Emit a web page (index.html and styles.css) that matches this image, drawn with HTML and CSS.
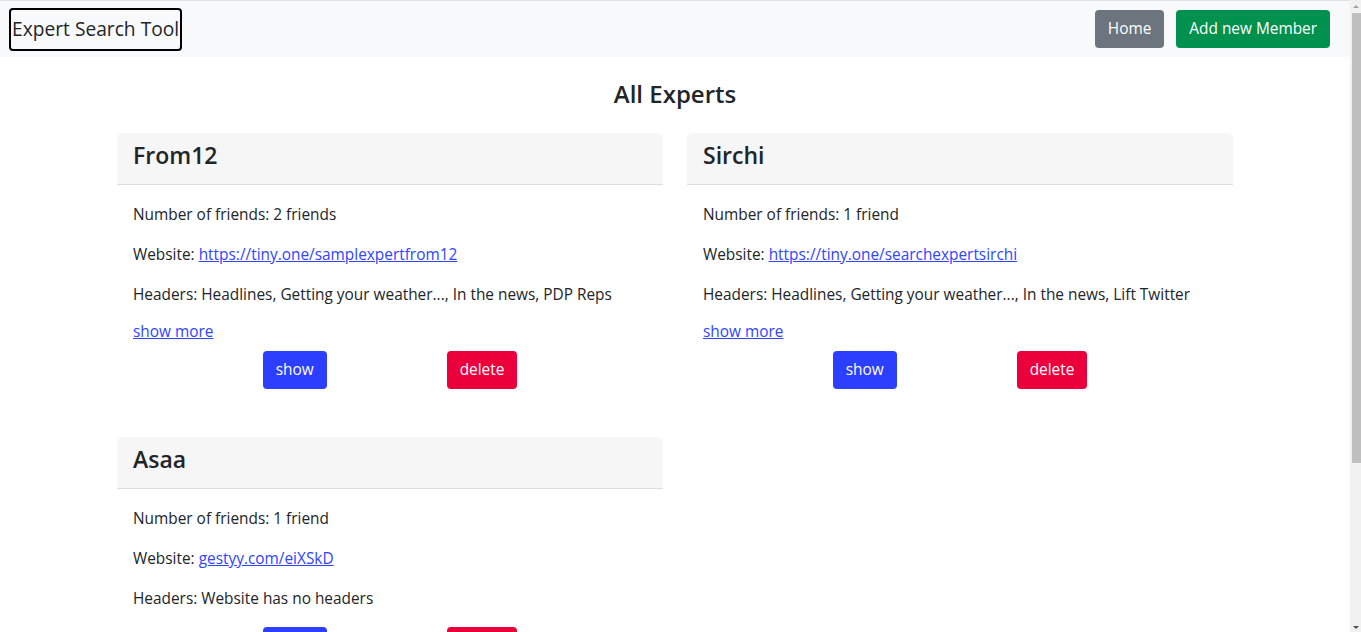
FILE: index.html
```html
<!DOCTYPE html>
<html lang="en">
<head>
<meta charset="utf-8">
<title>Expert Search Tool</title>
<link rel="stylesheet" href="styles.css">
</head>
<body>
<nav class="navbar">
  <div class="brand">Expert Search Tool</div>
  <div class="nav-actions">
    <a class="btn btn-gray" href="#">Home</a>
    <a class="btn btn-green" href="#">Add new Member</a>
  </div>
</nav>
<main class="container">
  <h2 class="title">All Experts</h2>
  <div class="grid">
    <div class="card">
      <div class="card-header"><h3>From12</h3></div>
      <div class="card-body">
        <p>Number of friends: 2 friends</p>
        <p>Website: <a class="link" href="#">https://tiny.one/samplexpertfrom12</a></p>
        <p>Headers: Headlines, Getting your weather..., In the news, PDP Reps</p>
        <a class="link more" href="#">show more</a>
        <div class="actions">
          <a class="btn btn-blue" href="#">show</a>
          <a class="btn btn-red" href="#">delete</a>
        </div>
      </div>
    </div>
    <div class="card">
      <div class="card-header"><h3>Sirchi</h3></div>
      <div class="card-body">
        <p>Number of friends: 1 friend</p>
        <p>Website: <a class="link" href="#">https://tiny.one/searchexpertsirchi</a></p>
        <p>Headers: Headlines, Getting your weather..., In the news, Lift Twitter</p>
        <a class="link more" href="#">show more</a>
        <div class="actions">
          <a class="btn btn-blue" href="#">show</a>
          <a class="btn btn-red" href="#">delete</a>
        </div>
      </div>
    </div>
    <div class="card">
      <div class="card-header"><h3>Asaa</h3></div>
      <div class="card-body">
        <p>Number of friends: 1 friend</p>
        <p>Website: <a class="link" href="#">gestyy.com/eiXSkD</a></p>
        <p>Headers: Website has no headers</p>
        <div class="actions">
          <a class="btn btn-blue" href="#">show</a>
          <a class="btn btn-red" href="#">delete</a>
        </div>
      </div>
    </div>
  </div>
</main>
<div class="scrollbar" aria-hidden="true">
  <span class="arrow-up"></span>
  <span class="thumb"></span>
  <span class="arrow-down"></span>
</div>
</body>
</html>
```

FILE: styles.css
```css
* { box-sizing: border-box; }

body {
  margin: 0 11px 0 0;
  font-family: "Open Sans", "Liberation Sans", sans-serif;
  font-size: 15.4px;
  line-height: 24px;
  color: #212529;
  background: #fff;
}

.navbar {
  display: flex;
  align-items: center;
  justify-content: space-between;
  height: 57px;
  padding: 0 20px 0 9px;
  background: #f8f9fa;
  border-top: 1px solid #dee2e6;
}

.brand {
  font-size: 19.2px;
  line-height: 30px;
  padding: 4.5px 1px;
  border: 2px solid #000;
  border-radius: 4px;
  color: #212529;
}

.nav-actions {
  display: flex;
  gap: 12px;
}

.btn {
  display: inline-block;
  padding: 6px 12px;
  border: 1px solid transparent;
  border-radius: 4px;
  font-size: 15.4px;
  line-height: 24px;
  color: #fff;
  text-decoration: none;
}

.btn-gray { background: #6c757d; }
.btn-green { background: #00914f; }
.btn-blue { background: #2c3fff; }
.btn-red { background: #ec003b; }

.container {
  max-width: 1140px;
  margin: 0 auto;
  padding: 0 12px 168px;
}

.title {
  text-align: center;
  font-size: 24px;
  font-weight: 600;
  line-height: 29px;
  margin: 22px 0 25px;
}

.grid {
  display: grid;
  grid-template-columns: 1fr 1fr;
  column-gap: 24px;
  row-gap: 32px;
  align-items: start;
}

.card {
  border-radius: 5px;
  background: #fff;
}

.card-header {
  background: #f6f6f6;
  border-bottom: 1px solid #dcdcdc;
  border-radius: 5px 5px 0 0;
  padding: 8px 16px 14px;
}

.card-header h3 {
  margin: 0;
  font-size: 23px;
  font-weight: 600;
  line-height: 29px;
}

.card-body {
  padding: 18px 16px 16px;
}

.card-body p {
  margin: 0 0 16px;
}

.link {
  color: #2f45ff;
  text-decoration: underline;
}

.more {
  display: block;
  width: max-content;
  margin: -3px 0 7px;
}

.actions {
  display: flex;
  justify-content: center;
  gap: 120px;
}

.scrollbar {
  position: fixed;
  top: 0;
  right: 0;
  bottom: 0;
  width: 11px;
  background: #f1f1f1;
}

.thumb {
  position: absolute;
  top: 13px;
  left: 2px;
  right: 0;
  height: 450px;
  background: #bfbfbf;
}

.arrow-up,
.arrow-down {
  position: absolute;
  left: 3px;
  width: 0;
  height: 0;
  border-left: 3.5px solid transparent;
  border-right: 3.5px solid transparent;
}

.arrow-up {
  top: 5px;
  border-bottom: 3.5px solid #a3a3a3;
}

.arrow-down {
  bottom: 3px;
  border-top: 3.5px solid #505050;
}
```
